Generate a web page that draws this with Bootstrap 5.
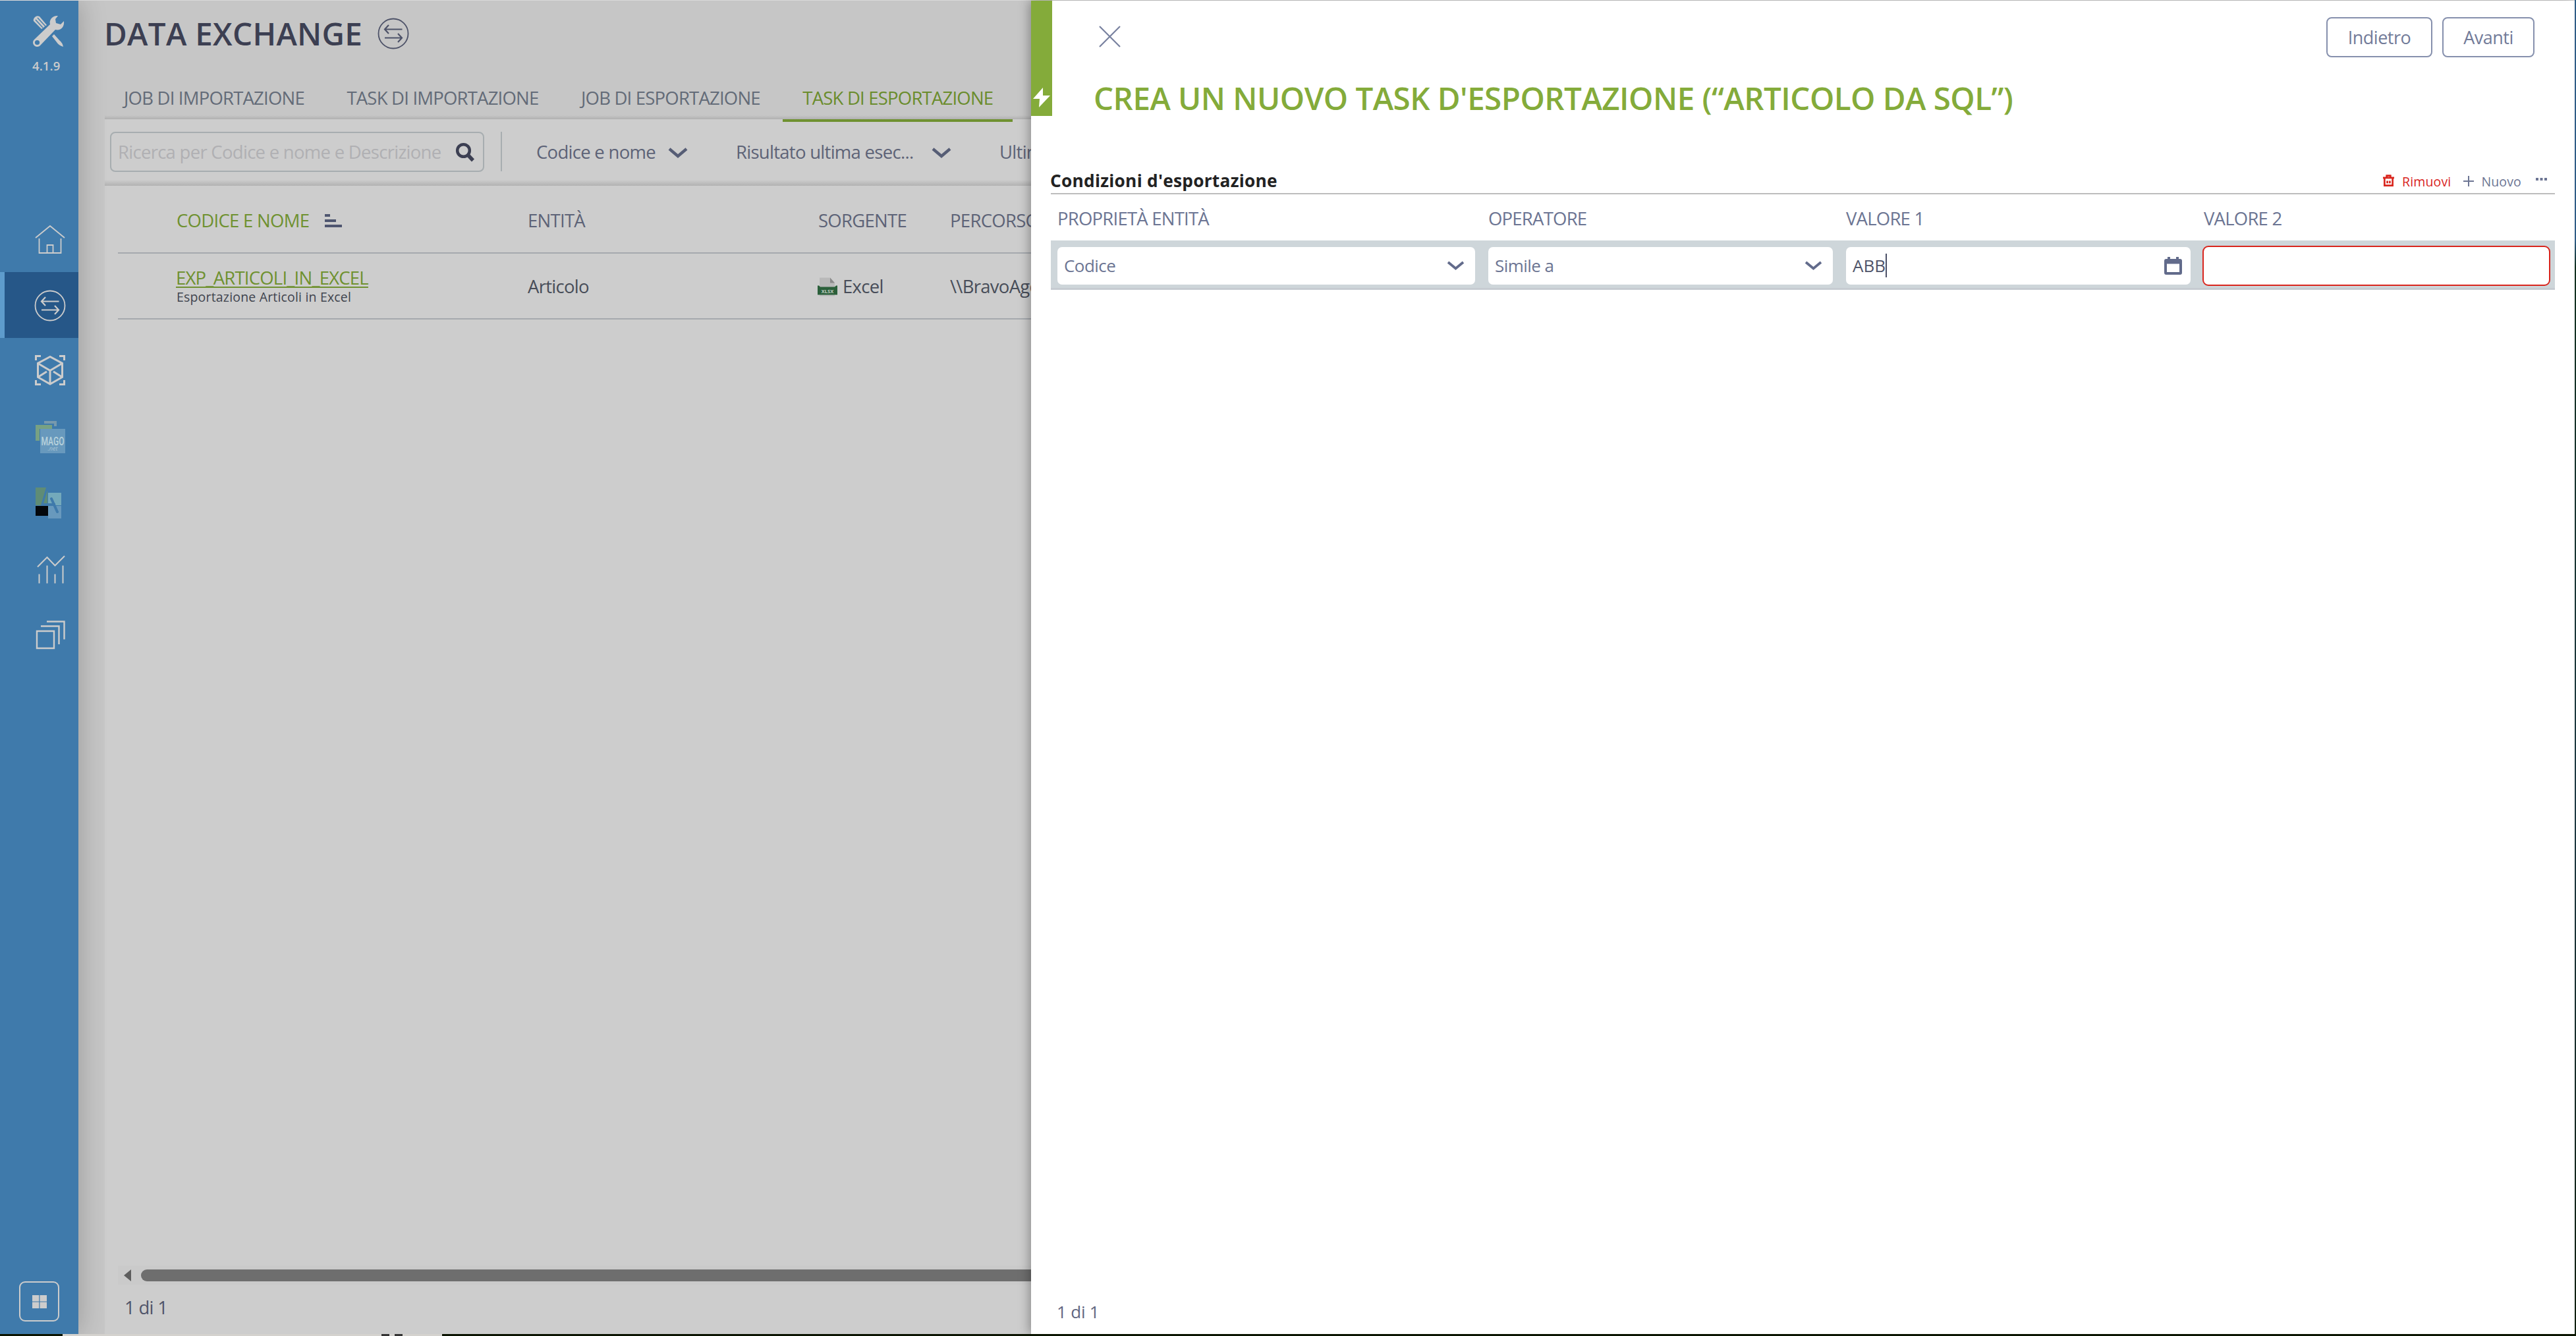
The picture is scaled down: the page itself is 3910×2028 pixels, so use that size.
<!DOCTYPE html>
<html lang="it">
<head>
<meta charset="utf-8">
<title>Data Exchange</title>
<link href="https://cdn.jsdelivr.net/npm/bootstrap@5.3.0/dist/css/bootstrap.min.css" rel="stylesheet">
<style>
html,body{height:2028px;margin:0;overflow:hidden}
body{font-family:"Open Sans","Noto Sans",sans-serif;font-size:27.5px;line-height:40px;letter-spacing:-.72px;background:#c6c6c6;color:#4a4f5e;border-top:1px solid #d9d9d9}
svg{display:block;flex:none;overflow:visible}
.txt{white-space:nowrap}
/* sidebar */
.side{width:119px;height:2024px;background:#3f7aab;color:#ccc;flex:none;box-shadow:2px 0 38px rgba(0,0,0,.22);z-index:2}
.side-gap{height:200px;flex:none}
.side-slot{height:100px;padding-left:52px}
.side-slot.active{background:#265788;border-left:7px solid #5e9ccc;padding-left:45px}
.tools{margin:22px 0 0 49px}
.ver{font-size:18.5px;font-weight:600;line-height:26px;letter-spacing:.1px;padding-left:49px;margin-top:15px;height:26px}
.tile-btn{width:61px;height:61px;border:2px solid #ccc;border-radius:9px;margin:auto 0 19px 29px}
/* page */
.page{height:2024px;overflow:hidden;padding-left:40px}
.page-head{height:106px;gap:23px;padding-bottom:7px}
.page-head h1{font-size:47.5px;font-weight:600;color:#3c3f52;line-height:60px;letter-spacing:.3px;margin:0 0 0 -1px}
.tabs{height:74px;color:#636b78;background:linear-gradient(#c6c6c6 0,#c6c6c6 92%,#b0b0b0 100%);padding:22px 0 0 29px;gap:64.500px;letter-spacing:-.8px}
.tab-on{color:#6a8c2c;position:relative}
.tab-on::after{content:"";position:absolute;left:-30px;right:-30px;top:52px;height:4px;background:#6f9130}
.filters{height:101px;background:linear-gradient(#cdcdcd 0,#cdcdcd 91%,#b2b2b2 100%);padding:19px 0 0 8px;color:#5d6377}
.search{width:568px;height:61px;border:2px solid #a7adb0;border-radius:8px;padding:0 12px 0 10px;color:#b0b0b3}
.vline{width:2px;height:60px;background:#a7adb0;margin-left:25px}
.picks{height:61px;margin-left:52px}
.pick-a{width:200px}.pick-b{width:297px;margin-left:73px}.pick-c{margin-left:73px}
.grid{background:#cdcdcd;height:1743px;padding-left:20px}
.grid-head{height:103px;padding-top:5px;border-bottom:2px solid #a5a9ae;color:#5d6377}
.grid-row{height:100px;padding-top:2px;border-bottom:2px solid #a5a9ae;color:#484d59}
.c0{width:89px}.c1{width:533px}.c2{width:441px}.c3{width:200px}
.sorted{gap:24px;color:#6f9130}
.source{gap:8px;margin-left:-1px;margin-right:1px}
.lnk{color:#6f9130;text-decoration:underline;text-decoration-thickness:2px;text-underline-offset:3px;text-decoration-skip-ink:none;line-height:31px;letter-spacing:-.78px;margin:-1px 0 0 -1px}
.sub{font-size:19.5px;line-height:27px;letter-spacing:.18px;color:#3f444d}
.hbar{height:29px;background:#cacaca;padding-left:9px}
.thumb{height:18px;background:#6e6e6e;border-radius:9px 0 0 9px;margin-left:15px}
.count{height:75px;padding:15px 0 0 10px;color:#50556a}
/* drawer */
.drawer{position:absolute;left:1565px;top:1px;width:2343px;height:2024px;background:#fff;box-shadow:-2px 0 16px rgba(0,0,0,.35);z-index:5;color:#6c7593}
.flag{width:32px;height:175px;background:#84ab3a;padding:0 0 13px 3px}
.drawer-top{height:108px;padding:25px 61px 0 72px}
.close-x{margin-top:14px}
.btn-o{border:2px solid #8690ad;border-radius:8px;height:61px;color:#727b99;font-size:27px;line-height:57px;letter-spacing:-.5px;padding:0;background:#fff}
.btn-back{width:161px}.btn-next{width:140px}
.drawer h2{font-size:47.5px;font-weight:600;letter-spacing:-.52px;color:#84ab3a;line-height:64px;margin:8px 0 0 63px}
.cond{margin:63px 0 0 30px;width:2283px}
.cond-head{height:51px;border-bottom:2px solid #bdbdbd;padding-top:10px}
.cond-head h3{font-size:26.3px;font-weight:700;color:#222;line-height:36px;letter-spacing:.25px;margin:0 0 0 -1px}
.mini{font-size:19.5px;line-height:28px;letter-spacing:.15px;margin-right:12px;padding-top:5px}
.rm{color:#d9251d;margin-left:12px}
.plus{margin:-3px 11px 0 19px}
.dots{margin:-8px 0 0 22px}
.gcols{display:grid;grid-template-columns:634px 523px 523px 527px;column-gap:20px}
.heads{padding:3px 0 0 10px;height:70px;align-items:center;letter-spacing:-.78px}
.frow{background:#ced6da;height:75px;border-bottom:3px solid #c6cbd1;padding:10px 0 0 10px}
.fld{background:#fff;border-radius:7px;height:57px;padding:0 16px 1px 10px;font-size:26px;letter-spacing:-.55px}
.fld.value{padding-right:13px;color:#50556a;letter-spacing:0}
.fld.bad{border:2px solid #d9251d;height:61px;margin:-2px 1px 0 -2px;border-radius:9px}
.caret{width:2px;height:36px;background:#4a4f66}
.total{padding-left:39px;height:54px;font-size:26px;letter-spacing:-.2px;color:#5f6680}
.edge{position:absolute;right:0;top:0;width:2px;height:2028px;background:linear-gradient(#2f5d86 0,#2f5d86 18%,#12301f 20%,#1f3a44 60%,#10200f 100%);z-index:6}
.strip{position:absolute;left:0;top:2025px;width:3910px;height:3px;background:#0b1400;z-index:7}
.strip-a{margin-left:95px;width:576px;background:#d4d2ce;padding-left:476px}
.blot{width:12px;height:3px;background:#333;margin-left:8px}
</style>
</head>
<body>
<div class="d-flex">
  <nav class="side d-flex flex-column">
    <svg class="tools" width="49" height="49" viewBox="0 0 49 49"><g fill="#ccc"><path d="M2 9q-1-3 2-6t7-1l11 13-8 6z"/><path d="m30 32 3-3 8 9q5 4 6 10-7-2-10-7z"/><path d="M39 1c-7-1-14 5-12 13L3 37c-6 6 3 15 9 9l23-24c8 2 14-4 13-13l-5 5-7-2-1-6z"/></g><circle cx="7.500" cy="41.500" r="3.600" fill="#3f7aab"/><path d="m5 7 11 12M8 4l12 13" stroke="#3f7aab" stroke-width="1.300"/></svg>
    <div class="ver txt">4.1.9</div>
    <div class="side-gap"></div>
    <div class="side-slot d-flex align-items-center"><svg width="48" height="48" viewBox="0 -1 48 48" fill="none" stroke="#ccc" stroke-width="1.800"><path d="M2 21 24 3l22 18M7.500 22v22h33V22M19.500 44V32h9v12"/></svg></div>
    <div class="side-slot active d-flex align-items-center"><svg width="48" height="48" viewBox="0 0 48 48" fill="none" stroke="#ccc" stroke-width="1.800"><circle cx="24" cy="25" r="22.500"/><path d="M37.500 18.500h-26M17 12l-6 6.500 6 6.500M11 31.500h26M31 25l6 6.500-6 6.500" stroke-width="2.200"/></svg></div>
    <div class="side-slot d-flex align-items-center"><svg width="48" height="48" viewBox="0 1 48 48" fill="none" stroke="#ccc" stroke-width="3"><path d="M2.500 9V2.500H10M38 2.500h7.500V9M2.500 39v6.500H10M38 45.500h7.500V39M24 3.500 5.500 13.500v21L24 45l18.500-10.500v-21zM5.500 13.500 24 24.500l18.500-11M24 24.500V45M5.500 34.500 19 26M42.500 34.500 29 26"/></svg></div>
    <div class="side-slot d-flex align-items-center"><svg width="48" height="52" viewBox="0 0 48 52" letter-spacing="0"><path d="M15 2h19v8h-4V6H15z" fill="#7799ad"/><path d="M2 8h25v6H8v18H2z" fill="#78a183"/><path d="M9 14h38v37H9z" fill="#6899bd"/><text x="28" y="38.500" text-anchor="middle" font-family="Roboto" font-weight="500" font-size="18" textLength="35" lengthAdjust="spacingAndGlyphs" fill="#b9d3dc">MAGO</text><text x="28" y="47" text-anchor="middle" font-family="Open Sans" font-style="italic" font-size="9" fill="#a9c4d4">.net</text></svg></div>
    <div class="side-slot d-flex align-items-center"><svg width="48" height="48" viewBox="0 0 48 48"><path d="M2 1h16L10 28H2zM20 5v20h-6z" fill="#5f8c76"/><path d="M21 9h20v19H21z" fill="#74a9bb"/><path d="M21 29h20v19H21z" fill="#6899bd"/><path d="M2 29h19v15H2z" fill="#03070c"/><path d="m26 18 9 20" stroke="#3f7aab" stroke-width="4" stroke-linecap="round"/><path d="M12 26.500h20" stroke="#3f7aab" stroke-width="3"/></svg></div>
    <div class="side-slot d-flex align-items-center"><svg width="48" height="48" viewBox="0 -1.500 48 48" fill="none" stroke="#ccc" stroke-width="2"><path d="M5 20 19.500 5.500 31.500 18 46 3.500M7.500 31v14M19.500 18v27M31.500 31v14M43.500 18v27"/></svg></div>
    <div class="side-slot d-flex align-items-center"><svg width="48" height="48" viewBox="0 0 48 48" fill="none" stroke="#ccc" stroke-width="2.400"><path d="M4 19h26v26H4zM10 11.500h27.500V39M19 4.500h26.500v27"/></svg></div>
    <div class="tile-btn d-flex align-items-center justify-content-center"><svg width="22" height="20" viewBox="0 0 22 20" fill="#ccc"><path d="M0 0h10.300v9.500H0zM11.500 0H22v9.500H11.500zM0 10.500h10.300V20H0zM11.500 10.500H22V20H11.500z"/></svg></div>
  </nav>
  <main class="page flex-grow-1">
    <header class="page-head d-flex align-items-center"><h1 class="txt">DATA EXCHANGE</h1><svg width="48" height="48" viewBox="0 0 48 48" fill="none" stroke="#4d5268" stroke-width="1.800"><circle cx="24" cy="24" r="22.500"/><path d="M37.500 17.500h-26M17 11l-6 6.500 6 6.500M11 30.500h26M31 24l6 6.500-6 6.500" stroke-width="2.200"/></svg></header>
    <div class="tabs d-flex txt"><span>JOB DI IMPORTAZIONE</span><span>TASK DI IMPORTAZIONE</span><span>JOB DI ESPORTAZIONE</span><span class="tab-on">TASK DI ESPORTAZIONE</span></div>
    <div class="filters d-flex txt">
      <div class="search d-flex align-items-center justify-content-between"><span>Ricerca per Codice e nome e Descrizione</span><svg width="30" height="30" viewBox="0 0 30 30" fill="none" stroke="#3c3f52" stroke-width="4.500"><circle cx="12.500" cy="12.500" r="9.300"/><path d="m19 19 8 8.500" stroke-width="5.500"/></svg></div>
      <div class="vline"></div>
      <div class="picks d-flex align-items-center"><span class="pick-a">Codice e nome</span><svg width="30" height="16" viewBox="0 -1 30 16" fill="none" stroke="#565d75" stroke-width="4.400"><path d="m2 2 13 11L28 2"/></svg>
      <span class="pick-b">Risultato ultima esec...</span><svg width="30" height="16" viewBox="0 -1 30 16" fill="none" stroke="#565d75" stroke-width="4.400"><path d="m2 2 13 11L28 2"/></svg><span class="pick-c">Ultima</span></div>
    </div>
    <div class="grid d-flex flex-column">
      <div class="grid-head d-flex align-items-center txt"><div class="c0"></div><div class="c1 sorted d-flex align-items-center"><span>CODICE E NOME</span><svg width="26" height="20" viewBox="0 0 26 20" fill="#4f5670"><path d="M0 0h8v4H0zM0 8h17v4H0zM0 16h26v4H0z"/></svg></div><div class="c2">ENTITÀ</div><div class="c3">SORGENTE</div><span>PERCORSO</span></div>
      <div class="grid-row d-flex align-items-center txt"><div class="c0"></div><div class="c1 d-flex flex-column align-items-start"><span class="lnk">EXP_ARTICOLI_IN_EXCEL</span><span class="sub">Esportazione Articoli in Excel</span></div><div class="c2">Articolo</div><div class="c3 source d-flex align-items-center"><svg width="30" height="30" viewBox="0 -1.500 30 30" letter-spacing="0"><path d="M3 0h16l7 8v20H3z" fill="#b9b9b9"/><path d="M19 0v8h7z" fill="#8a8a8a"/><path d="M0 12h2l2 2h22l2-2h2v14H0z" fill="#2a5f3a"/><text x="15" y="23" text-anchor="middle" font-family="Open Sans" font-weight="700" font-size="7.500" fill="#c4d0c6">XLSX</text></svg><span>Excel</span></div><span>\\BravoAgent</span></div>
      <div class="hbar d-flex align-items-center mt-auto"><svg width="11" height="18" viewBox="0 0 11 18"><path d="M11 0v18L0 9z" fill="#5e5e5e"/></svg><div class="thumb flex-grow-1"></div></div>
      <div class="count txt">1 di 1</div>
    </div>
  </main>
</div>
<aside class="drawer d-flex flex-column">
  <div class="d-flex">
    <div class="flag d-flex align-items-end"><svg width="26" height="30" viewBox="0 0 26 30"><path d="M15 0 0 17h10l-1 13L26 12H15z" fill="#fff"/></svg></div>
    <div class="flex-grow-1">
      <div class="drawer-top d-flex justify-content-between"><svg class="close-x" width="31" height="31" viewBox="0 0 31 31" stroke="#78819f" stroke-width="2.200"><path d="m0 0 31 31M31 0 0 31"/></svg><div class="d-flex" style="gap:15px"><button class="btn btn-o btn-back">Indietro</button><button class="btn btn-o btn-next">Avanti</button></div></div>
      <h2 class="txt">CREA UN NUOVO TASK D'ESPORTAZIONE (“ARTICOLO DA SQL”)</h2>
    </div>
  </div>
  <section class="cond">
    <div class="cond-head d-flex align-items-center justify-content-between txt"><h3>Condizioni d'esportazione</h3>
      <div class="mini d-flex align-items-center"><svg width="17" height="18" viewBox="0 2 18 19" fill="none" stroke="#d9251d" stroke-width="2.800"><path d="M0 5h18M6 4V1.500h6V4M2.500 6v11.500h13V6M7 10v4M11 10v4"/></svg><span class="rm">Rimuovi</span><svg class="plus" width="16" height="16" viewBox="0 0 16 16" stroke="#6c7593" stroke-width="2"><path d="M0 8h16M8 0v16"/></svg><span>Nuovo</span><svg class="dots" width="17" height="4" viewBox="0 0 17 4" fill="#6c7593"><path d="M0 0h4v4H0zM6.500 0h4v4h-4zM13 0h4v4h-4z"/></svg></div></div>
    <div class="gcols heads txt"><span>PROPRIETÀ ENTITÀ</span><span>OPERATORE</span><span>VALORE 1</span><span>VALORE 2</span></div>
    <div class="gcols frow txt">
      <div class="fld d-flex align-items-center justify-content-between"><span>Codice</span><svg width="27" height="14" viewBox="0 0 27 14" fill="none" stroke="#626b8b" stroke-width="3.800"><path d="m2 2 11.500 9.500L25 2"/></svg></div>
      <div class="fld d-flex align-items-center justify-content-between"><span>Simile a</span><svg width="27" height="14" viewBox="0 0 27 14" fill="none" stroke="#626b8b" stroke-width="3.800"><path d="m2 2 11.500 9.500L25 2"/></svg></div>
      <div class="fld value d-flex align-items-center"><span>ABB</span><span class="caret"></span><svg class="ms-auto" width="27" height="27" viewBox="0 0 27 27"><path d="M0 6q0-3 3-3h2V0h4v3h9V0h4v3h2q3 0 3 3v18q0 3-3 3H3q-3 0-3-3zM4 10.500v12.500h19V10.500z" fill="#626b8b" fill-rule="evenodd"/></svg></div>
      <div class="fld bad"></div>
    </div>
  </section>
  <div class="total txt mt-auto">1 di 1</div>
</aside>
<div class="edge"></div>
<div class="strip d-flex"><div class="strip-a d-flex"><div class="blot"></div><div class="blot"></div></div></div>
<script src="https://cdn.jsdelivr.net/npm/bootstrap@5.3.0/dist/js/bootstrap.bundle.min.js"></script>
</body>
</html>
